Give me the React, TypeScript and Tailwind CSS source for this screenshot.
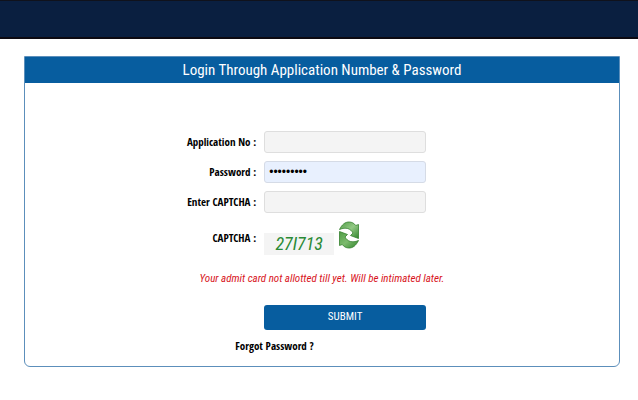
import { useState } from 'react';
import type { ReactNode } from 'react';

const inputClass =
    'w-full h-[22px] px-[5px] rounded-[3px] border border-[#dedede] bg-[#f4f4f4] text-[11px] text-black outline-none';

function Row({ label, htmlFor, children }: { label: string; htmlFor: string; children: ReactNode }) {
    return (
        <div className="grid grid-cols-[10fr_7fr_8fr] gap-x-2 items-center">
            <label
                htmlFor={htmlFor}
                className="text-right font-['Open_Sans_Condensed','Open_Sans',sans-serif] text-[11px] leading-4 font-bold whitespace-nowrap"
            >
                {label}
            </label>
            {children}
        </div>
    );
}

function RefreshIcon() {
    return (
        <svg viewBox="0 0 22 28" className="w-[22px] h-7" aria-hidden="true">
            <defs>
                <linearGradient id="arrowTop" x1="0" y1="0" x2="1" y2="1">
                    <stop offset="0" stopColor="#4f9c45" />
                    <stop offset="0.5" stopColor="#93c985" />
                    <stop offset="1" stopColor="#2f842b" />
                </linearGradient>
                <linearGradient id="arrowBottom" x1="0" y1="0" x2="1" y2="1">
                    <stop offset="0" stopColor="#4f9c45" />
                    <stop offset="0.5" stopColor="#7dbb6e" />
                    <stop offset="1" stopColor="#2f842b" />
                </linearGradient>
            </defs>
            <g stroke="#35802f" strokeWidth="0.8" strokeLinejoin="round">
                <path
                    fill="url(#arrowTop)"
                    d="M1.500 8.500C4 3.500 7 1 11 1c3 0 5.200 1.300 6.700 3.500L20.500 3.500V17.500L12.500 14.500 15 12C12.500 7.500 8 5.800 1.500 8.500Z"
                />
                <path
                    fill="url(#arrowBottom)"
                    d="M20.500 19.500C18 24.500 15 27 11 27c-3 0-5.200-1.300-6.700-3.500L1.500 24.500V10.500L9.500 13.500 7 16C9.500 20.500 14 22.200 20.500 19.500Z"
                />
            </g>
        </svg>
    );
}

export default function App() {
    const [form, setForm] = useState({ applicationNo: '', password: 'abcd12345', captcha: '' });

    const update = (field: string, value: string) => setForm({ ...form, [field]: value });

    return (
        <div className="min-h-screen bg-white font-['Roboto_Condensed',Roboto,sans-serif] text-black">
            <header className="h-[39px] bg-[#0a1f40] border-t border-b-2 border-t-[#10121c] border-b-[#0d0a12]" />

            <main className="pl-6 pr-[18px] pt-[17px] pb-6">
                <section className="rounded-b-md border border-[#5c8fbb] overflow-hidden">
                    <h1 className="bg-[#075d9f] text-white text-center text-[15px] leading-[26px]">
                        Login Through Application Number &amp; Password
                    </h1>

                    <form className="pt-12 pb-3" onSubmit={(e) => e.preventDefault()}>
                        <div className="flex flex-col gap-2">
                            <Row label="Application No :" htmlFor="applicationNo">
                                <input
                                    id="applicationNo"
                                    type="text"
                                    className={inputClass}
                                    value={form.applicationNo}
                                    onChange={(e) => update('applicationNo', e.target.value)}
                                />
                            </Row>
                            <Row label="Password :" htmlFor="password">
                                <input
                                    id="password"
                                    type="password"
                                    className="w-full h-[22px] px-1 rounded-[3px] border border-[#d5dbe6] bg-[#e8f0fe] font-['Liberation_Sans',sans-serif] text-xs text-black outline-none"
                                    value={form.password}
                                    onChange={(e) => update('password', e.target.value)}
                                />
                            </Row>
                            <Row label="Enter CAPTCHA :" htmlFor="captcha">
                                <input
                                    id="captcha"
                                    type="text"
                                    className={inputClass}
                                    value={form.captcha}
                                    onChange={(e) => update('captcha', e.target.value)}
                                />
                            </Row>
                            <Row label="CAPTCHA :" htmlFor="captchaCode">
                                <div className="flex items-start gap-1">
                                    <output
                                        id="captchaCode"
                                        className="w-[70px] h-[22px] mt-3 bg-[#f4f4f4] text-center text-lg leading-[22px] italic text-[#2a8a35]"
                                    >
                                        27I713
                                    </output>
                                    <button type="button" aria-label="Refresh CAPTCHA">
                                        <RefreshIcon />
                                    </button>
                                </div>
                            </Row>
                        </div>

                        <p className="mt-4 text-center text-[11px] leading-4 italic text-[#d8141c]">
                            Your admit card not allotted till yet. Will be intimated later.
                        </p>

                        <div className="mt-[18px] grid grid-cols-[10fr_7fr_8fr] gap-x-2">
                            <button type="submit" className="col-start-2 h-[25px] rounded-[3px] bg-[#075d9f] text-white text-[11px]">
                                SUBMIT
                            </button>
                        </div>

                        <div className="mt-2 w-[84%] text-center font-['Open_Sans_Condensed','Open_Sans',sans-serif] text-[11px] leading-4 font-bold">
                            <a href="#forgot">Forgot Password ?</a>
                        </div>
                    </form>
                </section>
            </main>
        </div>
    );
}
